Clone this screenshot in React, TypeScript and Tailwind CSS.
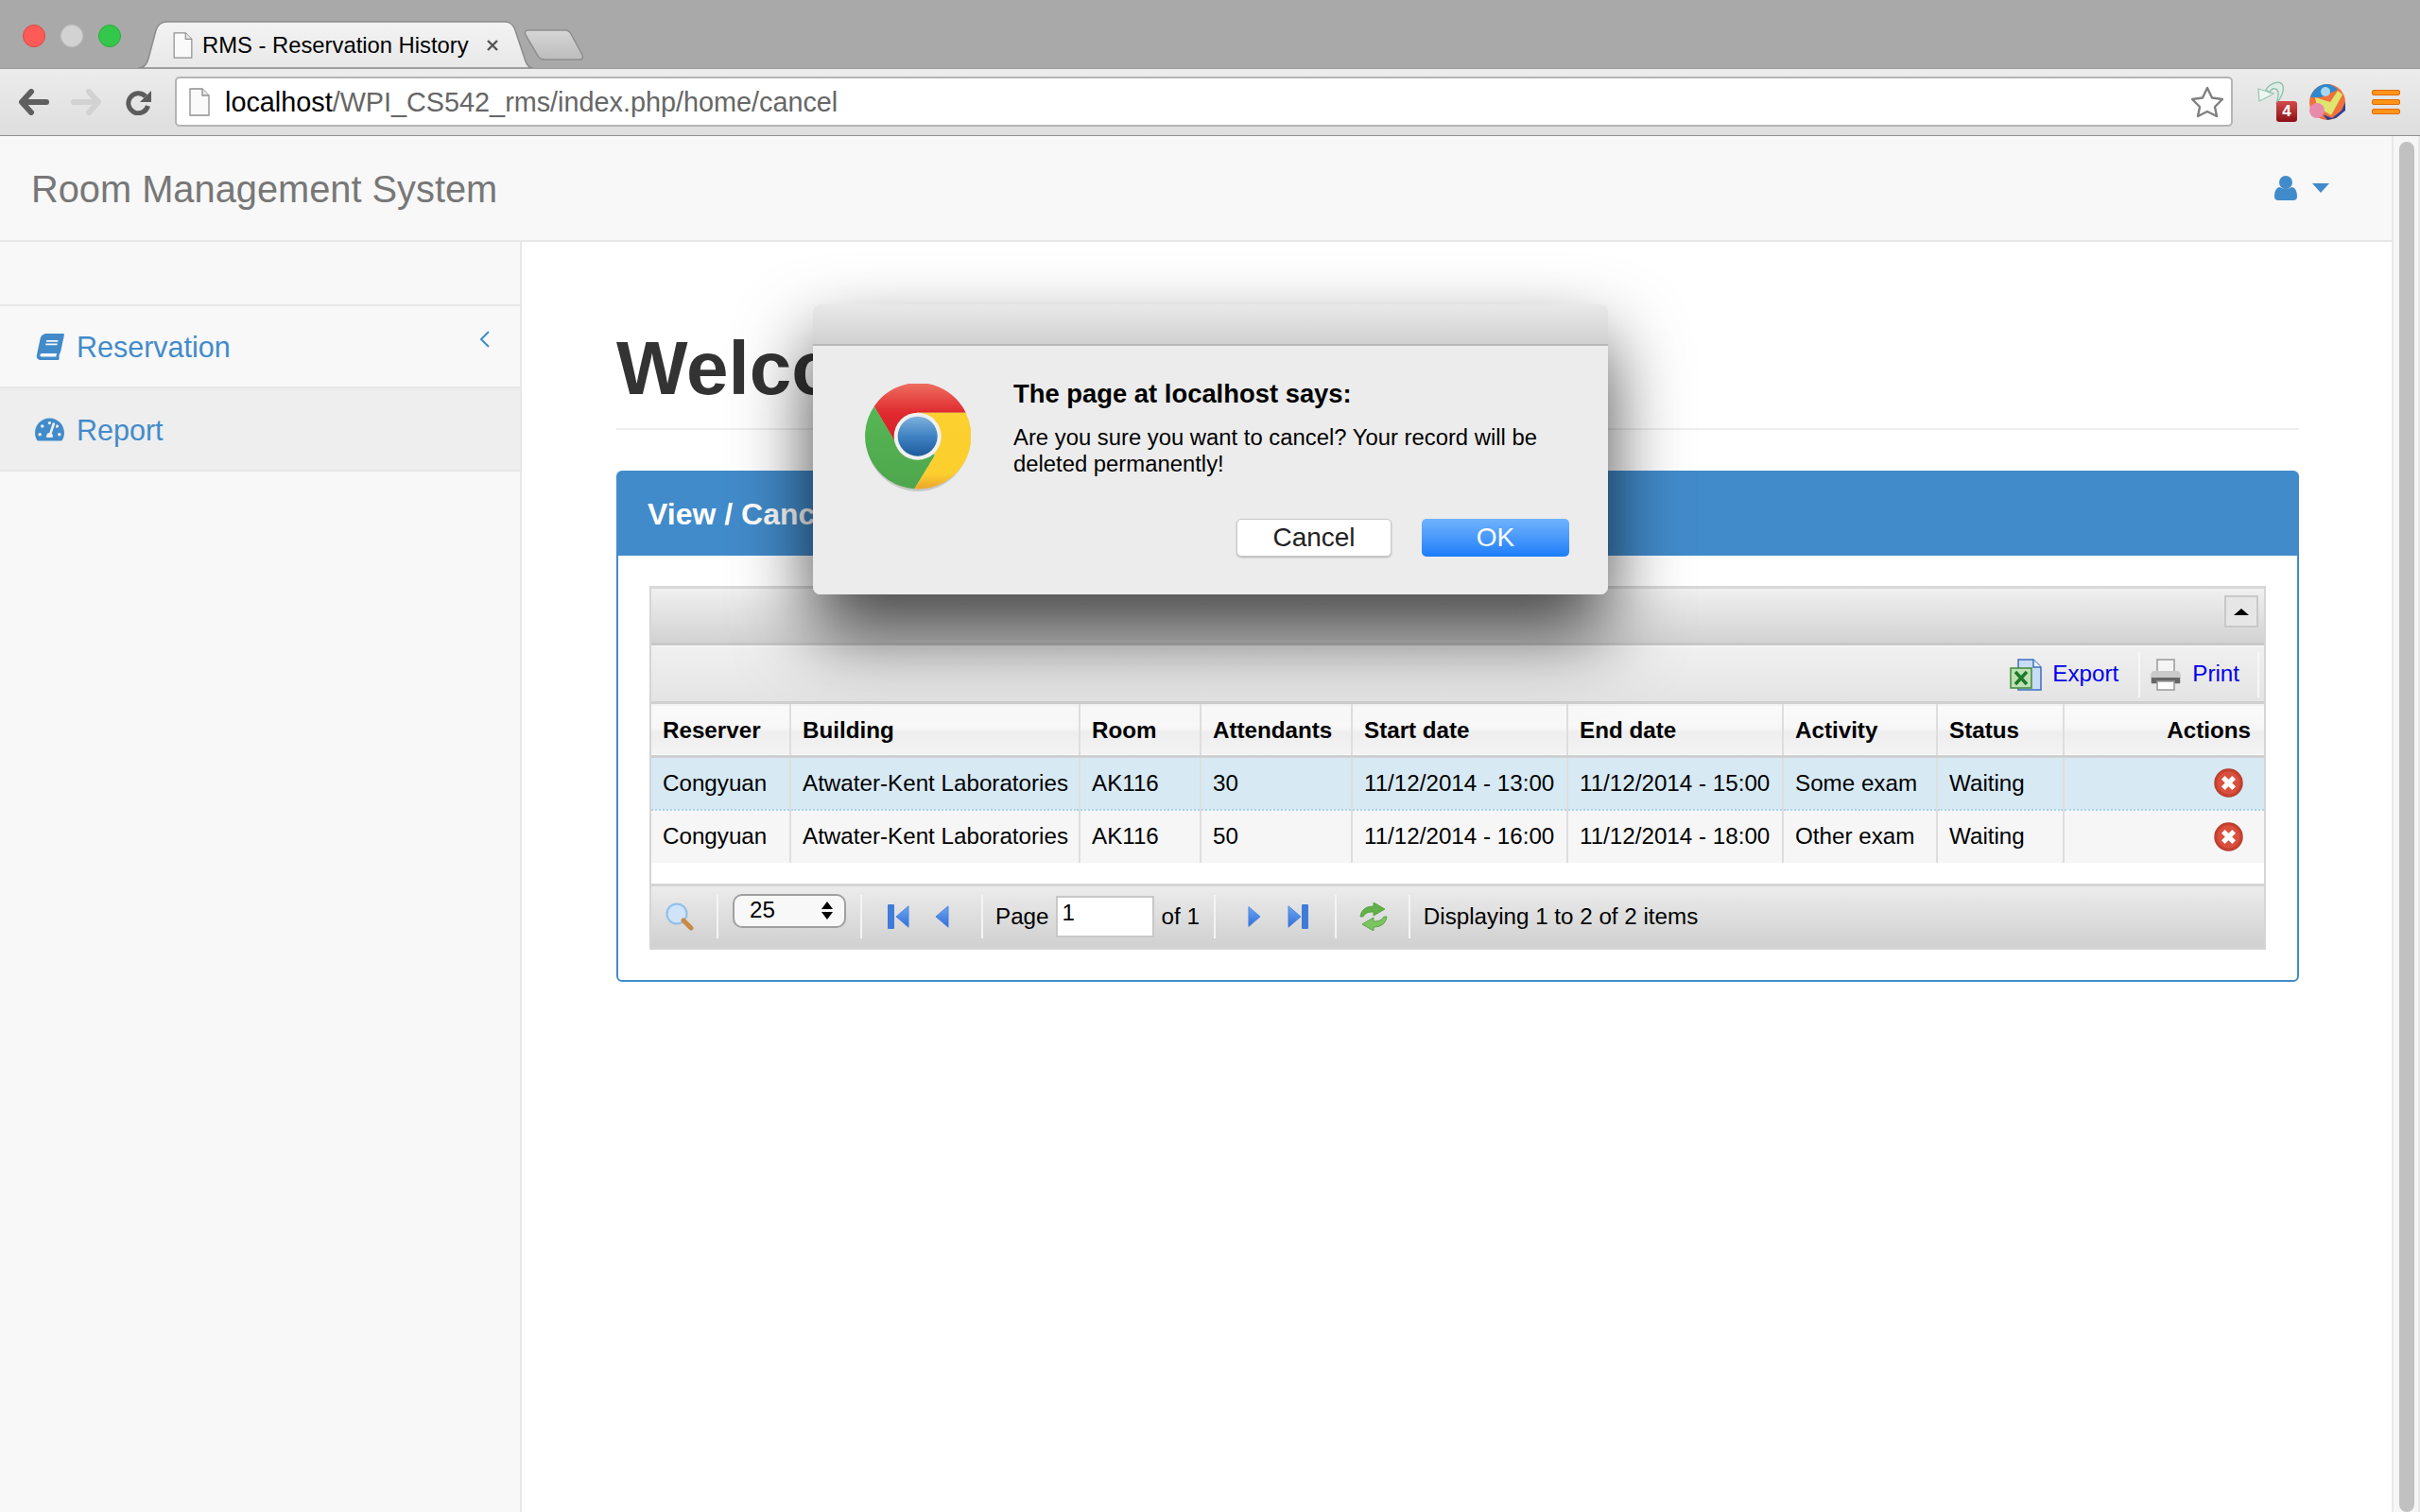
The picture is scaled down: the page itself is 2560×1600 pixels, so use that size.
import { FaBook, FaTachometerAlt } from "react-icons/fa";

const rows = [
  { attendants: "30", start: "11/12/2014 - 13:00", end: "11/12/2014 - 15:00", activity: "Some exam" },
  { attendants: "50", start: "11/12/2014 - 16:00", end: "11/12/2014 - 18:00", activity: "Other exam" },
];

function PageIcon({ className }: { className: string }) {
  return (
    <svg viewBox="0 0 22 30" className={className}>
      <path d="M1 1H14L21 8V29H1Z" fill="#fafafa" stroke="#8f8f8f" strokeWidth="1.3" />
      <path d="M14 1V8H21" fill="#e8e8e8" stroke="#8f8f8f" strokeWidth="1.3" />
    </svg>
  );
}

function TabStrip() {
  return (
    <div className="relative flex h-[72px] shrink-0 items-center bg-[#a9a9a9] pt-[4px]">
      <div className="ml-[24px] flex gap-[16px] self-start pt-[22px]">
        <span className="size-[24px] rounded-full border border-[#e2463f] bg-[#fc5b57]" />
        <span className="size-[24px] rounded-full border border-[#c4c4c4] bg-[#d2d2d2]" />
        <span className="size-[24px] rounded-full border border-[#2aac3c] bg-[#34c84a]" />
      </div>
      {/* tab shape */}
      <svg viewBox="0 0 480 50" className="absolute left-[146px] top-[22px] h-[50px] w-[480px]">
        <defs>
          <linearGradient id="tabFill" x1="0" y1="0" x2="0" y2="1">
            <stop offset="0" stopColor="#f3f3f3" />
            <stop offset="1" stopColor="#e8e8e8" />
          </linearGradient>
          <linearGradient id="newTabFill" x1="0" y1="0" x2="0" y2="1">
            <stop offset="0" stopColor="#d6d6d6" />
            <stop offset="1" stopColor="#bcbcbc" />
          </linearGradient>
        </defs>
        <path d="M413 10H452Q456 10 458 14L470 36Q472 41 467 41H430Q425 41 423 37L410 15Q408 10 413 10Z" fill="url(#newTabFill)" stroke="#8e8e8e" strokeWidth="1.500" />
        <path d="M0 50C6 50 9 47 11 40L19 10C21 4 25 1 31 1H388C394 1 397 4 399 10L409 40C411 47 414 50 418 50Z" fill="url(#tabFill)" stroke="#8c8c8c" strokeWidth="1.5" />
      </svg>
      <div className="absolute left-[183px] top-[34px] flex items-center">
        <PageIcon className="h-[28px] w-[21px]" />
        <span className="ml-[10px] text-[23.8px] leading-[28px] text-black">RMS - Reservation History</span>
        <svg viewBox="0 0 14 14" className="ml-[18px] size-[14px]">
          <path d="M2 2L12 12M12 2L2 12" stroke="#555" strokeWidth="2.4" />
        </svg>
      </div>
    </div>
  );
}

function Toolbar() {
  return (
    <div className="flex h-[72px] shrink-0 items-center border-y border-y-[#8f8f8f] border-t-[#9a9a9a] bg-gradient-to-b from-[#ececec] to-[#dedede] pb-[1px]">
      <svg viewBox="0 0 32 28" className="ml-[20px] h-[28px] w-[32px]">
        <path d="M13 3L3 14L13 25M4 14H29" fill="none" stroke="#5f5f5f" strokeWidth="6" strokeLinecap="round" strokeLinejoin="round" />
      </svg>
      <svg viewBox="0 0 32 28" className="ml-[23px] h-[28px] w-[32px]">
        <path d="M19 3L29 14L19 25M3 14H28" fill="none" stroke="#d2d2d2" strokeWidth="6" strokeLinecap="round" strokeLinejoin="round" />
      </svg>
      <svg viewBox="0 0 28 28" className="ml-[26px] size-[28px]">
        <path d="M21 8A10.500 10.500 0 1 0 23.500 18" fill="none" stroke="#5c5c5c" strokeWidth="5" />
        <path d="M27 2V14H15Z" fill="#5c5c5c" />
      </svg>
      <div className="ml-[24px] flex h-[53px] w-[2177px] items-center rounded-[5px] border-2 border-[#b4b4b4] bg-white">
        <PageIcon className="ml-[13px] h-[30px] w-[22px]" />
        <span className="ml-[16px] pt-[1px] text-[28.8px] leading-none text-[#666]">
          <span className="text-black">localhost</span>/WPI_CS542_rms/index.php/home/cancel
        </span>
        <svg viewBox="0 0 36 34" className="ml-auto mr-[7px] h-[34px] w-[36px]">
          <path d="M18 2L23 12.500L34 14L26 22L28 32L18 27L8 32L10 22L2 14L13 12.500Z" fill="#fff" stroke="#808080" strokeWidth="2.400" strokeLinejoin="round" />
        </svg>
      </div>
      <div className="relative ml-[25px] h-[44px] w-[44px]">
        <svg viewBox="0 0 30 28" className="absolute left-0 top-0 h-[28px] w-[30px]">
          <path d="M2 8L18 13L13 16L3 21Z" fill="#eef7f2" stroke="#9cc8b4" strokeWidth="1.3" />
          <path d="M10 9C14 2 24 -1 27 3C30 7 28 15 21 24C24 15 24 9 20 8C17 7 15 9 14 12Z" fill="#dceee6" stroke="#8ebea8" strokeWidth="1.3" />
        </svg>
        <span className="absolute left-[21px] top-[21px] flex h-[22px] w-[22px] items-center justify-center rounded-[3px] bg-gradient-to-b from-[#d64a4a] to-[#8c0d16] text-[17px] font-bold leading-none text-white">4</span>
      </div>
      <svg viewBox="0 0 38 38" className="ml-[12px] size-[38px]">
        <circle cx="19" cy="19" r="19" fill="#f0713c" />
        <path d="M19 0A19 19 0 0 0 1 14L12 14L30 6A19 19 0 0 0 19 0Z" fill="#2f88cc" />
        <path d="M6 14L22 19L30 7L35 11L23 33L8 24Z" fill="#dfe56f" />
        <path d="M14 32L24 36L34 28L38 19V28L28 36L19 38Z" fill="#2d3f9a" />
        <circle cx="17" cy="8" r="5" fill="#a8d8f0" />
        <circle cx="8" cy="28" r="8" fill="#e88bab" />
      </svg>
      <div className="ml-[28px] flex w-[30px] flex-col gap-[4px]">
        <span className="h-[6px] rounded-[2px] border border-[#e36a00] bg-[#ff9416]" />
        <span className="h-[6px] rounded-[2px] border border-[#e36a00] bg-[#ff9416]" />
        <span className="h-[6px] rounded-[2px] border border-[#e36a00] bg-[#ff9416]" />
      </div>
    </div>
  );
}

function Sidebar() {
  return (
    <aside className="w-[552px] shrink-0 border-r-2 border-[#e7e7e7] bg-[#f8f8f8] pt-[66px]">
      <div className="flex h-[89px] items-center border-y-2 border-[#e7e7e7] text-[#428bca]">
        <FaBook className="ml-[39px] size-[28px] -skew-x-12" />
        <span className="ml-[14px] pt-[2px] text-[30.5px] leading-none">Reservation</span>
        <svg viewBox="0 0 12 18" className="mb-[16px] ml-auto mr-[31px] h-[18px] w-[12px]">
          <path d="M10 1L2 9L10 17" fill="none" stroke="#428bca" strokeWidth="2" />
        </svg>
      </div>
      <div className="flex h-[88px] items-center border-b-2 border-[#e7e7e7] bg-[#eeeeee] text-[#428bca]">
        <FaTachometerAlt className="ml-[37px] size-[31px]" />
        <span className="ml-[13px] pt-[2px] text-[30.5px] leading-none">Report</span>
      </div>
    </aside>
  );
}

function ToolSep() {
  return <span className="block h-[46px] w-[2px] shrink-0 bg-[#f4f4f4]" />;
}

function Triangle({ dir, className }: { dir: "left" | "right"; className: string }) {
  return (
    <svg viewBox="0 0 16 26" className={className}>
      <defs>
        <linearGradient id="navBlue" x1="0" y1="0" x2="0" y2="1">
          <stop offset="0" stopColor="#6ea6f2" />
          <stop offset="1" stopColor="#2f6fd8" />
        </linearGradient>
      </defs>
      <path d={dir === "left" ? "M15 1V25L1 13Z" : "M1 1V25L15 13Z"} fill="url(#navBlue)" stroke="#3f7bd8" strokeWidth="0.8" />
    </svg>
  );
}

function DeleteIcon() {
  return (
    <svg viewBox="0 0 30 30" className="ml-auto size-[31px]">
      <circle cx="15" cy="15" r="14" fill="#c9412f" stroke="#b9402f" strokeWidth="1.5" />
      <circle cx="15" cy="15" r="11.500" fill="#d9503f" />
      <path d="M9.500 9.500L20.500 20.500M20.500 9.500L9.500 20.500" stroke="#fff" strokeWidth="5" />
    </svg>
  );
}

function Grid() {
  const th = "border-r-2 border-[#dedede] px-[12px] pt-[2px] text-left align-middle";
  const td = "border-r-2 border-[#dedede] px-[12px] align-middle";
  return (
    <div className="border-x-2 border-[#d5d5d5]">
      <div className="flex h-[63px] items-start justify-end border-y-[3px] border-t-[#d8d8d8] border-b-[#c8c8c8] bg-gradient-to-b from-[#f0f0f0] to-[#d2d2d2] pr-[6px] pt-[7px]">
        <button className="flex h-[34px] w-[36px] items-center justify-center border-2 border-[#c8c8c8] bg-[#e6e6e6]">
          <span className="border-x-[8px] border-b-[7px] border-x-transparent border-b-black" />
        </button>
      </div>
      <div className="flex h-[59px] items-center justify-end border-t-2 border-[#f4f4f4] bg-gradient-to-b from-[#f0f0f0] to-[#e4e4e4] pr-[5px] text-[24.2px] leading-none text-[#0000ee]">
        <svg viewBox="0 0 34 34" className="h-[34px] w-[34px]">
          <path d="M9 1H25L33 9V33H9Z" fill="#c9dcf5" stroke="#3e6fc0" strokeWidth="1.500" />
          <path d="M25 1V9H33" fill="#eef4fc" stroke="#3e6fc0" strokeWidth="1.500" />
          <rect x="1" y="10" width="22" height="21" fill="#bfe0b4" stroke="#3f8a3a" strokeWidth="1.500" />
          <path d="M6 14L18 27M18 14L6 27" stroke="#1e7a2a" strokeWidth="3.500" />
        </svg>
        <span className="ml-[11px]">Export</span>
        <span className="ml-[21px] h-[48px] w-[2px] bg-[#f7f7f7]" />
        <svg viewBox="0 0 34 34" className="ml-[10px] h-[34px] w-[34px]">
          <rect x="8" y="1" width="18" height="14" fill="#f4f4f4" stroke="#999" strokeWidth="1.500" />
          <path d="M4 13H30Q33 14 33 20V25Q33 27 30 27H4Q1 27 1 25V20Q1 14 4 13Z" fill="#c9c9c9" />
          <path d="M2 20H32V26H2Z" fill="#666" />
          <rect x="8" y="24" width="18" height="9" fill="#fff" stroke="#999" strokeWidth="1.500" />
        </svg>
        <span className="ml-[11px]">Print</span>
        <span className="ml-[19px] h-[48px] w-[2px] bg-[#f7f7f7]" />
      </div>
      <table className="w-full table-fixed border-collapse text-[24.2px] leading-none text-black">
        <colgroup>
          <col className="w-[147px]" />
          <col className="w-[306px]" />
          <col className="w-[128px]" />
          <col className="w-[160px]" />
          <col className="w-[228px]" />
          <col className="w-[228px]" />
          <col className="w-[163px]" />
          <col className="w-[134px]" />
          <col />
        </colgroup>
        <thead>
          <tr className="h-[57px] border-y-[3px] border-[#d0d0d0] bg-[linear-gradient(#fafafa_0%,#f7f7f7_45%,#eeeeee_55%,#f3f3f3_100%)] font-bold">
            <th className={th}>Reserver</th>
            <th className={th}>Building</th>
            <th className={th}>Room</th>
            <th className={th}>Attendants</th>
            <th className={th}>Start date</th>
            <th className={th}>End date</th>
            <th className={th}>Activity</th>
            <th className={th}>Status</th>
            <th className="pl-[12px] pr-[14px] pt-[2px] text-right align-middle">Actions</th>
          </tr>
        </thead>
        <tbody>
          {rows.map((row, i) => (
            <tr key={row.attendants} className={i === 0 ? "h-[56px] border-b-2 border-dotted border-[#a9d5ec] bg-[#d7e9f3]" : "h-[56px] bg-[#f6f6f6]"}>
              <td className={td}>Congyuan</td>
              <td className={`${td} whitespace-nowrap`}>Atwater-Kent Laboratories</td>
              <td className={td}>AK116</td>
              <td className={td}>{row.attendants}</td>
              <td className={`${td} whitespace-nowrap`}>{row.start}</td>
              <td className={`${td} whitespace-nowrap`}>{row.end}</td>
              <td className={`${td} whitespace-nowrap`}>{row.activity}</td>
              <td className={td}>Waiting</td>
              <td className="pr-[22px] align-middle">
                <DeleteIcon />
              </td>
            </tr>
          ))}
        </tbody>
      </table>
      <div className="h-[22px] bg-white" />
      <div className="flex h-[70px] items-center border-y-[3px] border-t-[#d5d5d5] border-b-[#d5d5d5] bg-gradient-to-b from-[#ececec] to-[#d0d0d0] text-[24.2px] leading-none text-black">
        <svg viewBox="0 0 30 30" className="ml-[15px] size-[30px]">
          <circle cx="12" cy="12" r="10.500" fill="#cfe4f8" stroke="#8fbfe8" strokeWidth="2" />
          <path d="M19 19L27 27" stroke="#c98a45" strokeWidth="5" strokeLinecap="round" />
        </svg>
        <span className="ml-[24px]"><ToolSep /></span>
        <div className="mb-[12px] ml-[15px] flex h-[36px] w-[120px] items-center justify-between rounded-[10px] border-2 border-[#a0a0a0] bg-[#f8f8f8] pl-[16px] pr-[12px]">
          <span>25</span>
          <span className="flex flex-col gap-[3px]">
            <span className="border-x-[6px] border-b-[8px] border-x-transparent border-b-black" />
            <span className="border-x-[6px] border-t-[8px] border-x-transparent border-t-black" />
          </span>
        </div>
        <span className="ml-[15px]"><ToolSep /></span>
        <span className="ml-[27px] h-[26px] w-[7px] rounded-[1px] bg-[#3f7bd8]" />
        <Triangle dir="left" className="ml-[1px] h-[26px] w-[15px]" />
        <Triangle dir="left" className="ml-[27px] h-[26px] w-[15px]" />
        <span className="ml-[34px]"><ToolSep /></span>
        <span className="ml-[13px] pt-[2px]">Page</span>
        <span className="ml-[7px] flex h-[44px] w-[104px] items-start border-2 border-[#c8c8c8] bg-white pl-[5px] pt-[4px]">1</span>
        <span className="ml-[8px] pt-[2px]">of 1</span>
        <span className="ml-[15px]"><ToolSep /></span>
        <Triangle dir="right" className="ml-[34px] h-[26px] w-[14px]" />
        <Triangle dir="right" className="ml-[28px] h-[26px] w-[15px]" />
        <span className="h-[26px] w-[7px] rounded-[1px] bg-[#3f7bd8]" />
        <span className="ml-[28px]"><ToolSep /></span>
        <svg viewBox="0 0 36 30" className="ml-[21px] h-[30px] w-[36px]">
          <path d="M4 15C5 7 11 4 18 4V0L30 7L18 14V10C13 10 9 11 7 15Z" fill="#62b04a" stroke="#4a9a38" strokeWidth="0.8" />
          <path d="M32 15C31 23 25 26 18 26V30L6 23L18 16V20C23 20 27 19 29 15Z" fill="#7cc460" stroke="#4a9a38" strokeWidth="0.8" />
        </svg>
        <span className="ml-[19px]"><ToolSep /></span>
        <span className="ml-[14px] pt-[2px]">Displaying 1 to 2 of 2 items</span>
      </div>
    </div>
  );
}

function ChromeLogo() {
  return (
    <svg viewBox="0 0 112 116" className="h-[116px] w-[112px] shrink-0">
      <defs>
        <linearGradient id="cRed" x1="0" y1="0" x2="0" y2="1">
          <stop offset="0" stopColor="#ee6f60" />
          <stop offset="0.5" stopColor="#e02a2f" />
          <stop offset="1" stopColor="#cf2128" />
        </linearGradient>
        <linearGradient id="cGreen" x1="0" y1="0" x2="0" y2="1">
          <stop offset="0" stopColor="#56b755" />
          <stop offset="1" stopColor="#4ea64c" />
        </linearGradient>
        <linearGradient id="cYellow" x1="0" y1="0" x2="0" y2="1">
          <stop offset="0" stopColor="#fbd02f" />
          <stop offset="0.8" stopColor="#fccf2e" />
          <stop offset="1" stopColor="#eda52c" />
        </linearGradient>
        <linearGradient id="cBlue" x1="0" y1="0" x2="0" y2="1">
          <stop offset="0" stopColor="#7fb1dd" />
          <stop offset="0.5" stopColor="#3f82c3" />
          <stop offset="1" stopColor="#1d5b9c" />
        </linearGradient>
      </defs>
      <ellipse cx="56" cy="58" rx="55" ry="56" fill="#000" opacity="0.15" />
      <path d="M9.700 24A56 56 0 0 1 106.700 30.700H55.700L32.300 62.300Z" fill="url(#cRed)" />
      <path d="M9.700 24L32.300 62.300L74 75.700L52.300 111.300A56 56 0 0 1 9.700 24Z" fill="url(#cGreen)" />
      <path d="M106.700 30.700A56 56 0 0 1 52.300 111.300L74 75.700L55.700 30.700Z" fill="url(#cYellow)" />
      <circle cx="55.700" cy="55.700" r="25" fill="#f1f1f1" />
      <circle cx="55.700" cy="55.700" r="21" fill="url(#cBlue)" />
    </svg>
  );
}

function Dialog() {
  return (
    <div className="absolute left-[860px] top-[178px] z-10 h-[307px] w-[841px] overflow-hidden rounded-[8px] bg-[#ececec] font-['Liberation_Sans',sans-serif]">
      <div className="h-[44px] border-b-2 border-[#b8b8b8] bg-gradient-to-b from-[#e9e9e9] to-[#d0d0d0]" />
      <div className="flex pl-[55px] pt-[40px]">
        <ChromeLogo />
        <div className="-mt-[4px] ml-[45px] text-black">
          <p className="text-[27.4px] font-bold leading-[30px]">The page at localhost says:</p>
          <p className="mt-[17px] w-[580px] text-[23.85px] leading-[28px]">
            Are you sure you want to cancel? Your record will be deleted permanently!
          </p>
        </div>
      </div>
      <div className="absolute right-[41px] top-[227px] flex gap-[32px] text-[28px] leading-none">
        <button className="flex h-[40px] w-[164px] items-center justify-center rounded-[5px] border border-[#c9c9c9] bg-white text-[#222] shadow-[0_1px_2px_rgba(0,0,0,0.25)]">
          Cancel
        </button>
        <button className="flex h-[40px] w-[156px] items-center justify-center rounded-[5px] bg-gradient-to-b from-[#6fb2fb] to-[#1a7dfa] text-white">
          OK
        </button>
      </div>
    </div>
  );
}

export default function App() {
  return (
    <div className="flex h-[1600px] w-[2560px] flex-col overflow-hidden bg-white font-['Liberation_Sans',sans-serif]">
      <TabStrip />
      <Toolbar />
      <div className="relative flex min-h-0 flex-1">
        <div className="flex min-w-0 flex-1 flex-col">
          <header className="flex h-[112px] shrink-0 items-center justify-between border-b-2 border-[#e7e7e7] bg-[#f8f8f8] pl-[33px] pr-[66px]">
            <span className="pt-[3px] text-[39.8px] leading-none text-[#777]">Room Management System</span>
            <div className="flex items-center gap-[16px] text-[#428bca]">
              <svg viewBox="0 0 24 26" className="h-[26px] w-[24px]">
                <circle cx="12" cy="7" r="7" fill="#428bca" />
                <path d="M0 22C0 15 3 12 6 12C8 14 16 14 18 12C21 12 24 15 24 22C24 25 22 26 20 26H4C2 26 0 25 0 22Z" fill="#428bca" />
              </svg>
              <span className="border-x-[9px] border-t-[10px] border-x-transparent border-t-[#428bca]" />
            </div>
          </header>
          <div className="flex min-h-0 flex-1">
            <Sidebar />
            <main className="min-w-0 flex-1 pl-[100px] pr-[98px] pt-[86px]">
              <h1 className="border-b-2 border-[#eeeeee] pb-[15px] text-[80px] font-bold leading-[96px] text-[#333]">Welcome</h1>
              <section className="mt-[43px] h-[541px] rounded-[6px] border-2 border-[#428bca]">
                <div className="flex h-[88px] items-center bg-[#428bca] pl-[31px] text-[32px] font-bold leading-none text-white">
                  View / Cancel Reservation
                </div>
                <div className="px-[33px] pt-[32px]">
                  <Grid />
                </div>
              </section>
            </main>
          </div>
        </div>
        <div className="w-[30px] shrink-0 border-x-2 border-[#e8e8e8] bg-[#f6f6f6] pl-[6px] pt-[6px]">
          <div className="h-[1450px] w-[16px] rounded-full bg-[#c1c1c1]" />
        </div>
        <div className="pointer-events-none absolute left-[860px] top-[178px] z-[5] h-[307px] w-[841px] rounded-[8px] shadow-[0_40px_80px_rgba(0,0,0,0.72)]" />
        <Dialog />
      </div>
    </div>
  );
}
